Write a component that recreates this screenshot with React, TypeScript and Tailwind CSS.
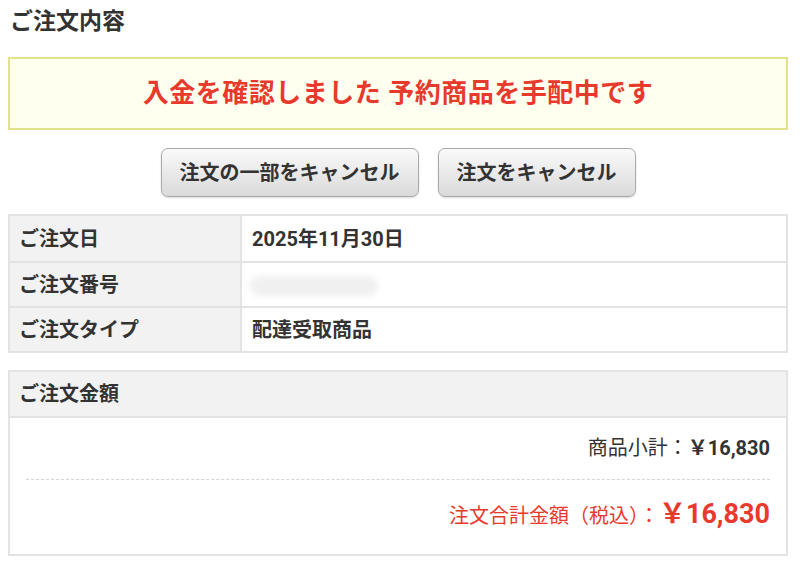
export default function App() {
  const font = { fontFamily: "Roboto, 'Noto Sans CJK JP', sans-serif" };
  const rows = [
    { label: "ご注文日", value: "2025年11月30日" },
    { label: "ご注文番号", value: null },
    { label: "ご注文タイプ", value: "配達受取商品" },
  ];

  return (
    <div
      className="w-[800px] h-[572px] bg-white pl-2 pr-3 text-[#333]"
      style={font}
    >
      {/* page title */}
      <h1 className="pt-[7px] pl-[2px] text-[23px] leading-[30px] font-bold">
        ご注文内容
      </h1>

      {/* status banner */}
      <div className="mt-[20px] h-[73px] flex items-center justify-center border-2 border-[#e2e28c] bg-[#fffff0]">
        <p className="text-[26px] font-bold text-[#e8392d] tracking-[0.5px]">
          入金を確認しました 予約商品を手配中です
        </p>
      </div>

      {/* actions */}
      <div className="mt-[18px] flex justify-center gap-[19px]">
        <button className="h-[49px] px-[18px] rounded-[7px] border border-[#a9a9a9] bg-gradient-to-b from-[#fafafa] to-[#dadada] shadow-[0_1px_2px_rgba(0,0,0,0.15)] text-[20px] font-bold text-[#333]">
          注文の一部をキャンセル
        </button>
        <button className="h-[49px] px-[18px] rounded-[7px] border border-[#a9a9a9] bg-gradient-to-b from-[#fafafa] to-[#dadada] shadow-[0_1px_2px_rgba(0,0,0,0.15)] text-[20px] font-bold text-[#333]">
          注文をキャンセル
        </button>
      </div>

      {/* order info */}
      <div className="mt-[17px] border-2 border-[#e3e3e3]">
        {rows.map((r, i) => (
          <div
            key={r.label}
            className={`flex h-[45px] ${i > 0 ? "border-t-2 border-[#e3e3e3]" : ""}`}
          >
            <div className="w-[232px] shrink-0 flex items-center pl-[9px] bg-[#f2f2f2] border-r-2 border-[#e3e3e3] text-[20px] font-bold">
              {r.label}
            </div>
            <div className="flex-1 flex items-center pl-[10px] text-[20px] font-bold">
              {r.value ?? (
                <div className="ml-[-2px] mt-[2px] w-[128px] h-[20px] rounded-full bg-[#f0f0f0] blur-[3px]" />
              )}
            </div>
          </div>
        ))}
      </div>

      {/* amount */}
      <div className="mt-[17px] border-2 border-[#e3e3e3]">
        <div className="h-[46px] flex items-center pl-[9px] bg-[#f2f2f2] border-b-2 border-[#e3e3e3] text-[20px] font-bold">
          ご注文金額
        </div>
        <div className="px-[16px] pt-[15px] pb-[21px]">
          <div className="text-right text-[20px] leading-[30px]">
            <span>商品小計：</span>
            <span className="font-bold">￥16,830</span>
          </div>
          <div className="mt-[16px] border-t border-dashed border-[#d6d6d6]" />
          <div className="mt-[17px] flex items-baseline justify-end text-[#e8392d] leading-[34px]">
            <span className="text-[20px]">注文合計金額（税込）：</span>
            <span className="text-[27px] font-bold">￥16,830</span>
          </div>
        </div>
      </div>
    </div>
  );
}
